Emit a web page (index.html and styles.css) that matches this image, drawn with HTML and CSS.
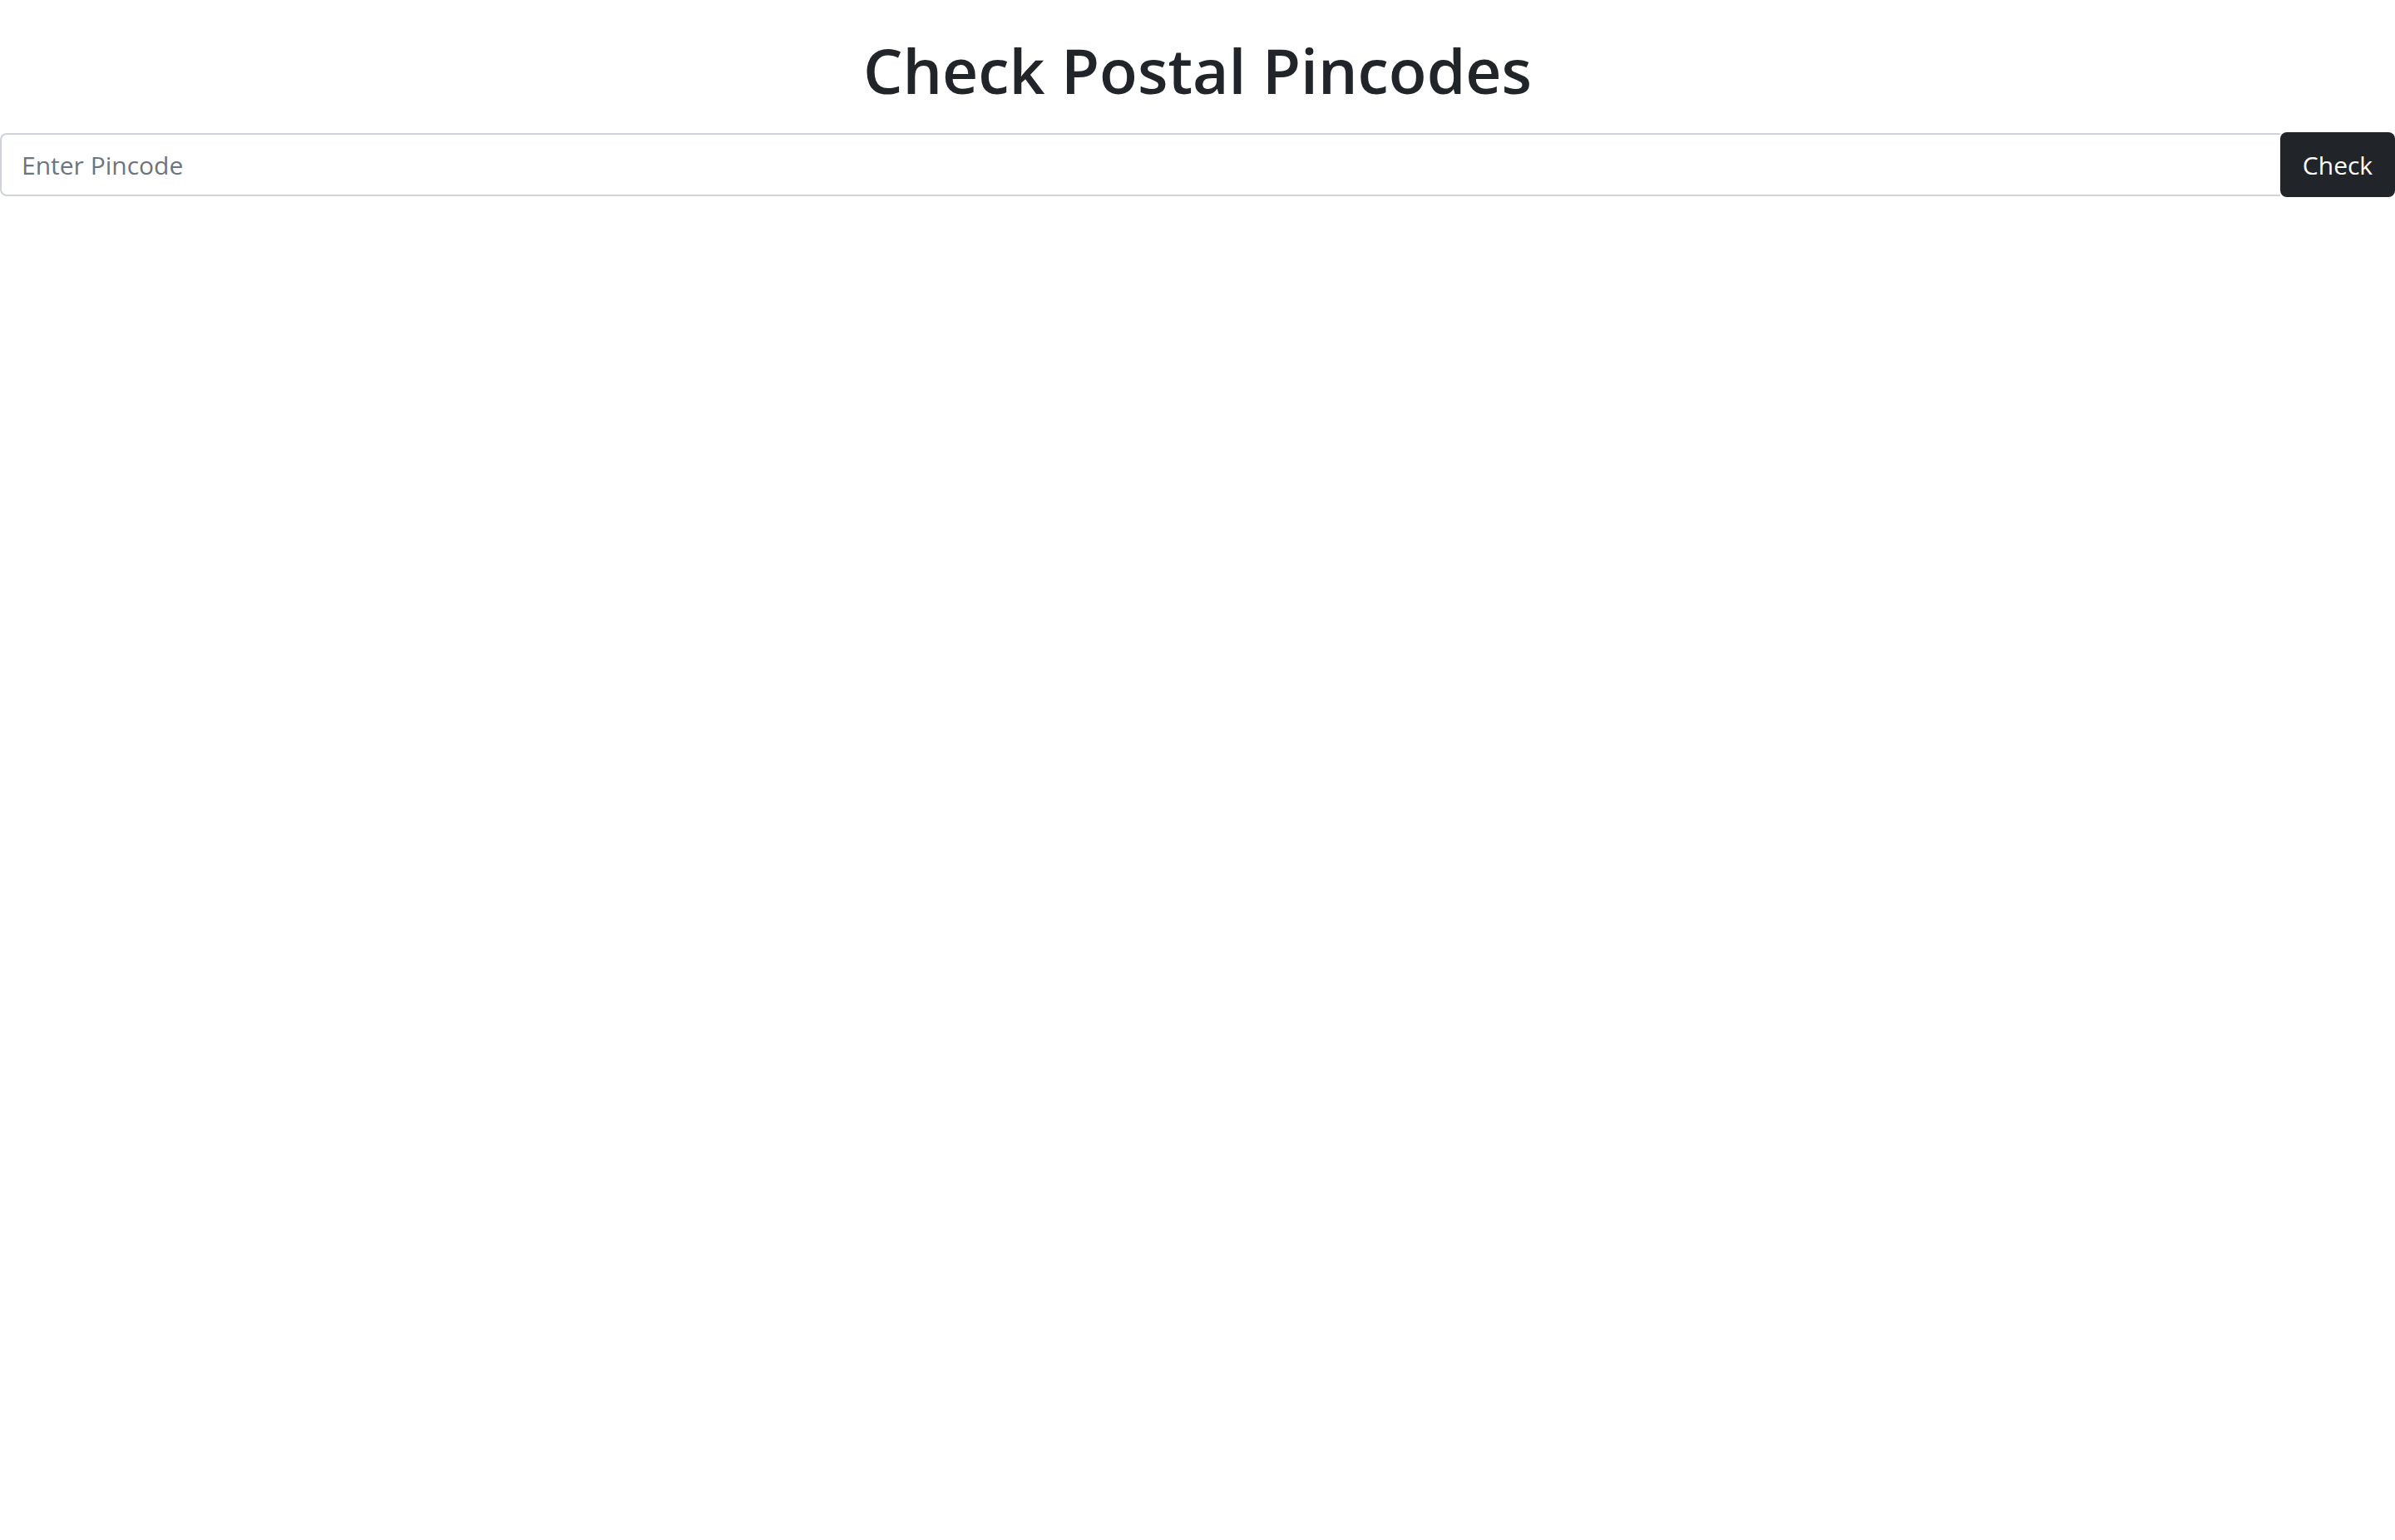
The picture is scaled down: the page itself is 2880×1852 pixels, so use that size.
FILE: index.html
```html
<!DOCTYPE html>
<html lang="en">
<head>
<meta charset="utf-8">
<title>Check Postal Pincodes</title>
<link rel="stylesheet" href="styles.css">
</head>
<body>
<div class="page">
  <h1 class="title">Check Postal Pincodes</h1>
  <form class="search">
    <input class="search-input" type="text" placeholder="Enter Pincode">
    <button class="search-btn" type="button">Check</button>
  </form>
</div>
</body>
</html>
```
FILE: styles.css
```css
* { box-sizing: border-box; }
html, body { margin: 0; padding: 0; background: #fff; }
body {
  font-family: "Open Sans", "Noto Sans", "Liberation Sans", sans-serif;
  color: #212529;
}
.page { padding-top: 36px; }
.title {
  margin: 0 0 28px;
  text-align: center;
  font-size: 75px;
  font-weight: 600;
  line-height: 96px;
  color: #212529;
}
.search {
  display: flex;
  margin: 0;
}
.search-input {
  flex: 1;
  height: 76px;
  padding: 12px 24px;
  border: 2px solid #ced4da;
  border-right: none;
  border-radius: 8px 0 0 8px;
  font-family: inherit;
  font-size: 30px;
  color: #495057;
  outline: none;
}
.search-input::placeholder { color: #6c757d; }
.search-btn {
  width: 138px;
  height: 78px;
  margin-top: -1px;
  border: none;
  border-radius: 8px;
  background: #212529;
  color: #fff;
  font-family: inherit;
  font-size: 30px;
  padding: 0;
}
```
